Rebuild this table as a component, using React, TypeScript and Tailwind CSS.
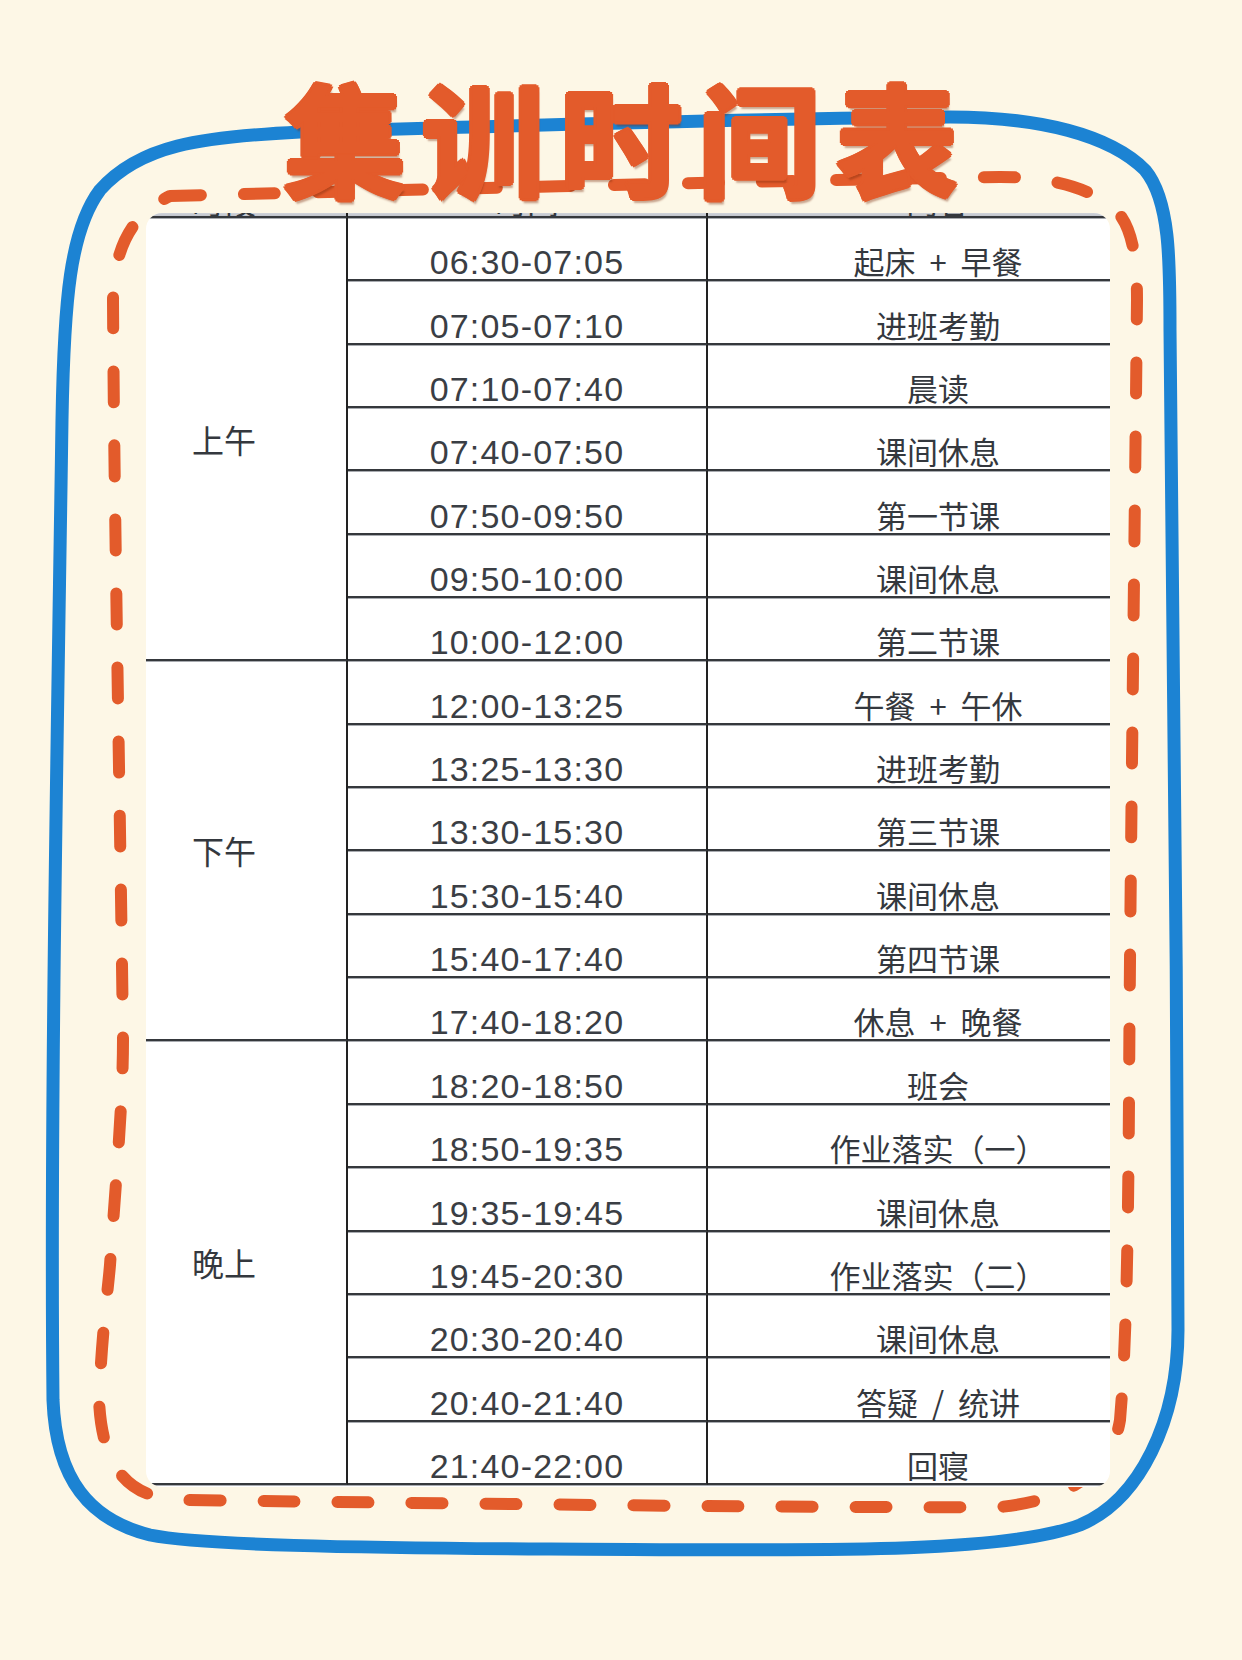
const schedule = [
  {
    period: '上午',
    span: 'row-span-7',
    rows: [
      ['06:30-07:05', '起床  +  早餐'],
      ['07:05-07:10', '进班考勤'],
      ['07:10-07:40', '晨读'],
      ['07:40-07:50', '课间休息'],
      ['07:50-09:50', '第一节课'],
      ['09:50-10:00', '课间休息'],
      ['10:00-12:00', '第二节课'],
    ],
  },
  {
    period: '下午',
    span: 'row-span-6',
    rows: [
      ['12:00-13:25', '午餐  +  午休'],
      ['13:25-13:30', '进班考勤'],
      ['13:30-15:30', '第三节课'],
      ['15:30-15:40', '课间休息'],
      ['15:40-17:40', '第四节课'],
      ['17:40-18:20', '休息  +  晚餐'],
    ],
  },
  {
    period: '晚上',
    span: 'row-span-7',
    rows: [
      ['18:20-18:50', '班会'],
      ['18:50-19:35', '作业落实（一）'],
      ['19:35-19:45', '课间休息'],
      ['19:45-20:30', '作业落实（二）'],
      ['20:30-20:40', '课间休息'],
      ['20:40-21:40', '答疑  /  统讲'],
      ['21:40-22:00', '回寝'],
    ],
  },
];

const cjk = "font-['Noto_Sans_CJK_SC',sans-serif]";
const line = 'border-b-2 border-[#35383c] shadow-[0_1px_0_#a8abb0]';

function Frame() {
  // hand drawn blue outline + orange dashed outline
  return (
    <svg className="absolute inset-0" width="1242" height="1660" viewBox="0 0 1242 1660" fill="none">
      <path
        d="M300 132 C500 126 800 118 950 117 C1040 117 1110 135 1145 170 C1170 200 1170 260 1170 330 C1172 600 1178 1000 1178 1330 C1178 1420 1140 1500 1080 1525 C1000 1555 800 1550 550 1549 C350 1548 200 1545 150 1535 C90 1520 56 1480 53 1400 C50 1100 58 700 62 420 C64 300 70 230 100 190 C140 145 200 137 300 132 Z"
        stroke="#1c83d3"
        strokeWidth="13"
        strokeLinejoin="round"
      />
      <path
        d="M170 196 C400 190 800 180 1000 177 C1060 177 1100 192 1120 215 C1135 235 1137 270 1137 300 C1134 600 1130 900 1129 1100 C1128 1250 1126 1350 1120 1420 C1112 1470 1070 1500 1000 1507 C800 1508 500 1504 180 1500 C130 1498 102 1470 99 1400 C102 1330 108 1290 110 1265 C116 1180 123 1100 123 1040 C120 800 114 500 113 300 C114 250 130 215 170 196"
        stroke="#e35b2b"
        strokeWidth="12"
        strokeLinecap="round"
        strokeDasharray="31 43"
      />
    </svg>
  );
}

export default function App() {
  return (
    <div className="relative w-[1242px] h-[1660px] overflow-hidden bg-[#fdf7e6] pt-[74px]">
      <Frame />
      <h1
        className={`relative z-20 h-[124px] pl-[16px] text-center text-[122px] leading-none font-bold tracking-[16px] text-[#e35b2b] ${cjk} [text-shadow:3px_0_0_#e35b2b,-3px_0_0_#e35b2b,0_3px_0_#e35b2b,0_-3px_0_#e35b2b,2px_2px_0_#e35b2b,-2px_2px_0_#e35b2b,2px_-2px_0_#e35b2b,-2px_-2px_0_#e35b2b,2px_5px_2px_rgba(120,40,10,0.4)]`}
      >
        集训时间表
      </h1>

      <div className="relative z-10 mt-[15px] ml-[146px] w-[964px] h-[1274px] overflow-hidden rounded-[16px] bg-white">
        <div className="-mt-[58px] -ml-[44px] grid grid-cols-[246px_360px_460px] text-[#34383e]">
          <div className={`h-[63px] flex items-end justify-center border-r-2 border-r-[#222] bg-linear-to-b from-white from-80% to-[#c1c5cd] text-[32px] leading-none ${cjk} ${line}`}>
            时段
          </div>
          <div className={`h-[63px] flex items-end justify-center border-r-2 border-r-[#222] bg-linear-to-b from-white from-80% to-[#c1c5cd] text-[32px] leading-none ${cjk} ${line}`}>
            时间
          </div>
          <div className={`h-[63px] flex items-end justify-center bg-linear-to-b from-white from-80% to-[#c1c5cd] text-[32px] leading-none ${cjk} ${line}`}>
            内容
          </div>

          {schedule.map((group) => (
            <>
              <div
                key={group.period}
                className={`${group.span} col-start-1 flex items-center justify-center border-r-2 border-r-[#222] text-[32px] leading-none ${cjk} ${line}`}
              >
                {group.period}
              </div>
              {group.rows.map(([time, task]) => (
                <>
                  <div
                    key={time}
                    className={`col-start-2 h-[63.35px] flex items-end justify-center border-r-2 border-r-[#222] font-['Liberation_Sans',Arial,sans-serif] text-[34px] tracking-[1.2px] leading-none text-[#3a3e44] ${line}`}
                  >
                    {time}
                  </div>
                  <div
                    key={time + task}
                    className={`col-start-3 h-[63.35px] flex items-end justify-center pb-[3px] text-[31px] leading-none whitespace-pre ${cjk} ${line}`}
                  >
                    {task}
                  </div>
                </>
              ))}
            </>
          ))}
        </div>
      </div>
    </div>
  );
}
